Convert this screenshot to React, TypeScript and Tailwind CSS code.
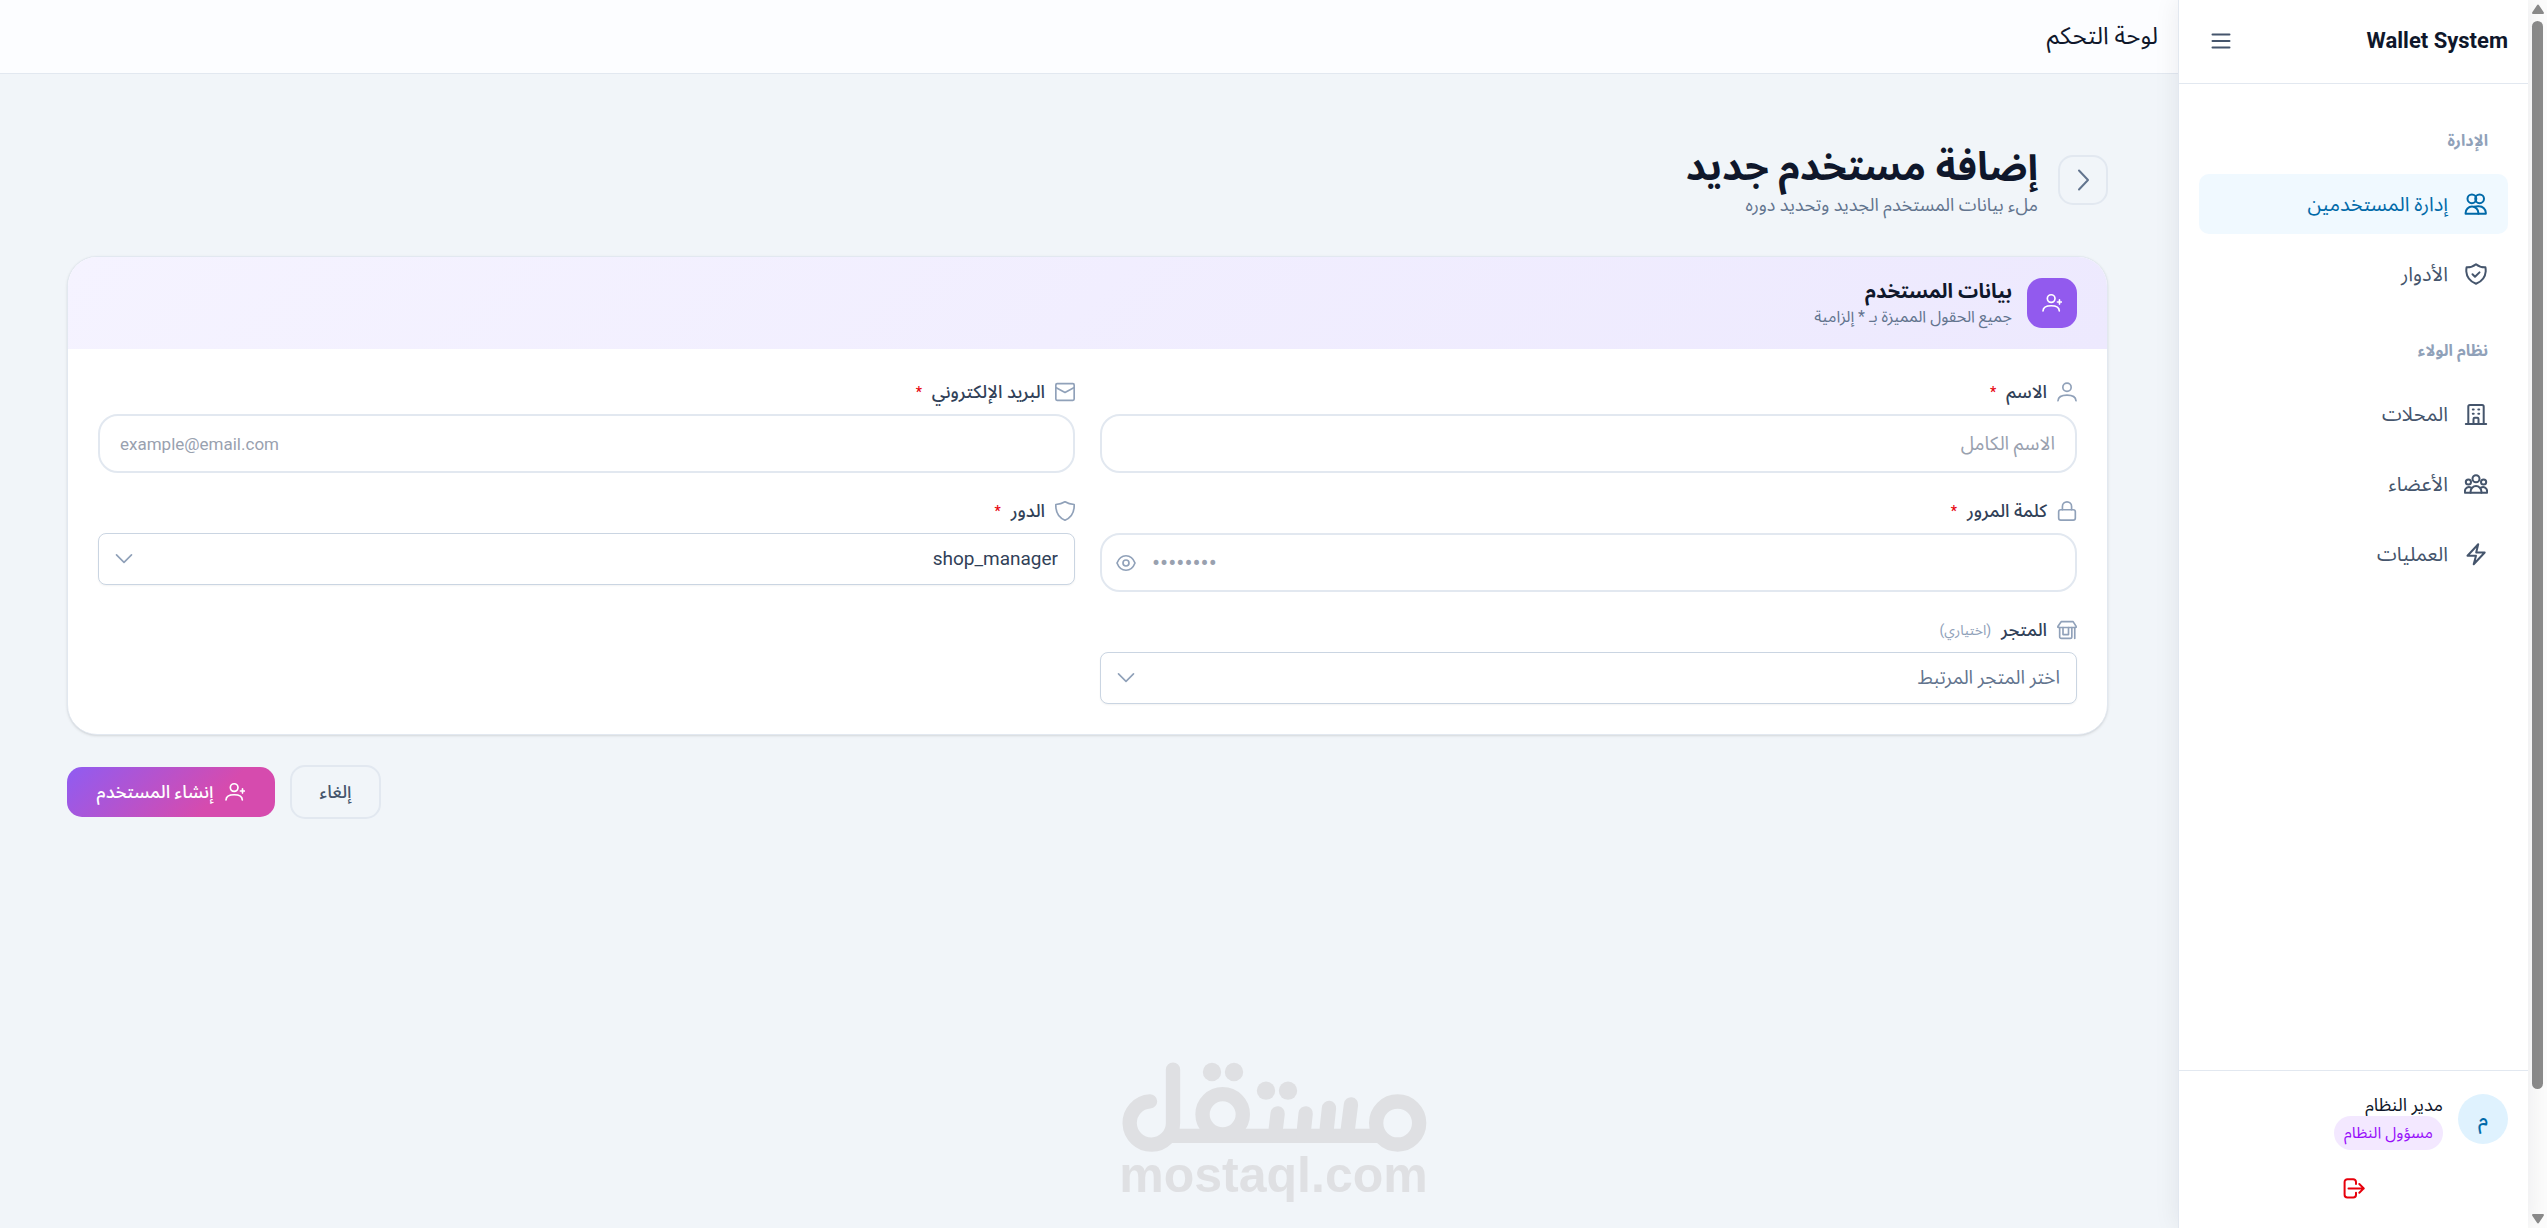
import { useState, type ReactNode } from "react";

interface IconProps {
  className?: string;
  children?: ReactNode;
}

function Icon({ className = "size-6", children }: IconProps) {
  return (
    <svg
      viewBox="0 0 24 24"
      fill="none"
      stroke="currentColor"
      strokeWidth={2}
      strokeLinecap="round"
      strokeLinejoin="round"
      aria-hidden="true"
      className={`shrink-0 ${className}`}
    >
      {children}
    </svg>
  );
}

const icons = {
  menu: <path d="M3.5 5.5h17M3.5 12h17M3.5 18.5h17" />,
  users: (
    <>
      <circle cx="7.9" cy="6.8" r="4.4" />
      <circle cx="15.6" cy="6.8" r="4.4" />
      <path d="M1.6 21.8v-.8a6.4 6.4 0 0 1 12.8 0v.8H1.6Z" />
      <path d="M10.2 14.8c1.400-.4 3.200-.7 5-.5a6.6 6.6 0 0 1 6.600 6.500v1h-7.400" />
    </>
  ),
  shieldCheck: (
    <>
      <path d="M12 2.2c2.6 2.2 5.8 3.2 9.4 3.1.3 1.4.4 2.7.3 4.2-.4 6-4 10-9.7 12.3C6.3 19.5 2.7 15.5 2.3 9.5c-.1-1.5 0-2.8.3-4.2 3.6.1 6.8-.9 9.4-3.1Z" />
      <path d="m8.5 12.3 2.5 2.4 4.5-4.3" />
    </>
  ),
  building: (
    <>
      <path d="M1.8 22h20.4M4.3 22V4.5a1.6 1.6 0 0 1 1.6-1.6h12.2a1.6 1.6 0 0 1 1.6 1.6V22" />
      <path d="M8.8 7.4h.9M14.3 7.4h.9M8.8 11.8h.9M14.3 11.8h.9" />
      <path d="M9.5 22v-5a1.2 1.2 0 0 1 1.2-1.2h2.6a1.2 1.2 0 0 1 1.2 1.2v5" />
    </>
  ),
  members: (
    <>
      <circle cx="12" cy="6.8" r="3.5" />
      <circle cx="4.4" cy="10" r="2.6" />
      <circle cx="19.6" cy="10" r="2.6" />
      <path d="M6.6 20.8v-1.3a5.4 5.4 0 0 1 10.8 0v1.3H6.6Z" />
      <path d="M7 15.6a4 4 0 0 0-6.1 3.4v1.8h5.7M17 15.6a4 4 0 0 1 6.1 3.4v1.8h-5.7" />
    </>
  ),
  bolt: <path d="M3.5 13.7 14.2 2.2l-2 8.3h8.5L9.7 22.2l2.3-8.5H3.5Z" />,
  logout: (
    <>
      <path d="M14 8V6a2.8 2.8 0 0 0-2.8-2.8H5.4A2.8 2.8 0 0 0 2.6 6v12.8a2.8 2.8 0 0 0 2.8 2.8h5.8a2.8 2.8 0 0 0 2.8-2.8v-2" />
      <path d="M6.5 12.4h15.3M17.3 8l4.5 4.4-4.5 4.4" />
    </>
  ),
  user: (
    <>
      <circle cx="12" cy="6.3" r="5" />
      <path d="M1.2 22.5c.3-4.3 4.3-6.7 10.8-6.7s10.5 2.4 10.8 6.7" />
    </>
  ),
  mail: (
    <>
      <rect x="1" y="2" width="22" height="20" rx="1.5" />
      <path d="m1.5 7 10.5 5.5L22.5 7" />
    </>
  ),
  lock: (
    <>
      <rect x="2" y="10.5" width="20" height="12.5" rx="2.5" />
      <path d="M6.5 10.5v-4a5.5 5.5 0 0 1 11 0v4" />
    </>
  ),
  shield: (
    <path d="M12 1c3.3 2 7 3 11 3.2C23.3 13 19.5 20 12 23 4.5 20 .7 13 1 4.2 5 4 8.7 3 12 1Z" />
  ),
  store: (
    <>
      <path d="M5 2h14.3L23 7.7a.8.8 0 0 1-.7 1.3H1.7A.8.8 0 0 1 1 7.7L5 2Z" />
      <path d="M3.2 9v11a2 2 0 0 0 2 2h10.6a2 2 0 0 0 2-2V9M21.3 9v13.2" />
      <path d="M7.2 9v8.5h6.6V9" />
    </>
  ),
  userPlus: (
    <>
      <circle cx="11" cy="6.7" r="4.6" />
      <path d="M1.2 21.5c.2-4.2 3.5-6.2 9.8-6.2s9.6 2 9.8 6.2M21 8.3v5M18.5 10.8h5" />
    </>
  ),
  eye: (
    <>
      <path d="M1.2 12C3.4 6.3 7.2 3.3 12 3.3S20.6 6.3 22.8 12C20.6 17.7 16.8 20.7 12 20.7S3.4 17.7 1.2 12Z" />
      <circle cx="12" cy="12" r="3.6" />
    </>
  ),
  chevronDown: <path d="m3 7 9 9 9-9" />,
  chevronRight: <path d="m8 2.5 9 9.5-9 9.5" />,
};

type IconName = keyof typeof icons;

const sections: {
  title: string;
  items: { label: string; icon: IconName; active?: boolean }[];
}[] = [
  {
    title: "الإدارة",
    items: [
      { label: "إدارة المستخدمين", icon: "users", active: true },
      { label: "الأدوار", icon: "shieldCheck" },
    ],
  },
  {
    title: "نظام الولاء",
    items: [
      { label: "المحلات", icon: "building" },
      { label: "الأعضاء", icon: "members" },
      { label: "العمليات", icon: "bolt" },
    ],
  },
];

function Sidebar() {
  return (
    <aside className="z-10 flex w-[350px] shrink-0 flex-col border-l border-slate-200 bg-white shadow-[0_0_24px_rgba(15,23,42,0.08)]">
      <div className="flex h-[84px] items-center justify-between border-b border-slate-200 px-5 pb-0.5">
        <span className="text-[22px] font-bold text-slate-900">Wallet System</span>
        <button type="button" aria-label="القائمة" className="p-2.5 text-slate-600">
          <Icon>{icons.menu}</Icon>
        </button>
      </div>
      <nav className="flex flex-1 flex-col gap-[30px] px-5 pt-10">
        {sections.map((section) => (
          <div key={section.title} className="flex flex-col gap-2.5">
            <h2 className="px-5 pb-1.5 text-base leading-[34px] font-bold text-slate-400">
              {section.title}
            </h2>
            {section.items.map((item) => (
              <a
                key={item.label}
                href="#"
                className={`flex h-[60px] items-center gap-4 rounded-[10px] px-5 text-xl ${
                  item.active ? "bg-sky-50 text-sky-700" : "text-slate-600"
                }`}
              >
                <Icon>{icons[item.icon]}</Icon>
                {item.label}
              </a>
            ))}
          </div>
        ))}
      </nav>
      <div className="border-t border-slate-200 px-5 pt-[23px] pb-[18px]">
        <div className="flex gap-[15px]">
          <div className="flex size-[50px] items-center justify-center rounded-full bg-sky-100 text-xl font-medium text-sky-700">
            م
          </div>
          <div className="flex flex-col items-start">
            <span className="text-lg leading-[22px] text-slate-900">مدير النظام</span>
            <span className="rounded-full bg-purple-100 px-2.5 text-base leading-[34px] text-purple-600">
              مسؤول النظام
            </span>
          </div>
        </div>
        <button
          type="button"
          aria-label="تسجيل الخروج"
          className="mt-4 flex h-11 w-full items-center justify-center text-red-600"
        >
          <Icon>{icons.logout}</Icon>
        </button>
      </div>
    </aside>
  );
}

interface FieldProps {
  id: string;
  label: string;
  icon: IconName;
  required?: boolean;
  hint?: string;
  children: ReactNode;
}

function Field({ id, label, icon, required, hint, children }: FieldProps) {
  return (
    <div className="flex flex-col gap-2.5">
      <label
        htmlFor={id}
        className="flex h-[25px] items-center gap-2.5 text-lg font-medium text-slate-700"
      >
        <Icon className="size-5 text-slate-400">{icons[icon]}</Icon>
        <span>{label}</span>
        {required && <span className="text-sm text-red-600">*</span>}
        {hint && (
          <span className="text-sm font-normal text-slate-400">{hint}</span>
        )}
      </label>
      {children}
    </div>
  );
}

const inputClass =
  "h-[59px] w-full rounded-[20px] border-2 border-slate-200 bg-white px-5 text-slate-800 placeholder:text-gray-400";

interface SelectProps {
  id: string;
  muted?: boolean;
  options: string[];
}

function Select({ id, muted, options }: SelectProps) {
  return (
    <div className="relative">
      <select
        id={id}
        className={`h-[52px] w-full appearance-none rounded-lg border border-slate-300 bg-white px-4 text-[19px] shadow-xs ${
          muted ? "text-slate-500" : "text-slate-700"
        }`}
      >
        {options.map((o) => (
          <option key={o}>{o}</option>
        ))}
      </select>
      <Icon className="pointer-events-none absolute top-4 left-4 size-5 text-slate-400">
        {icons.chevronDown}
      </Icon>
    </div>
  );
}

function UserForm() {
  const [showPassword, setShowPassword] = useState(false);
  return (
    <form onSubmit={(e) => e.preventDefault()}>
      <section className="overflow-hidden rounded-[30px] border border-slate-200 bg-white shadow-sm">
        <div className="flex items-center gap-[15px] bg-[linear-gradient(135deg,#f5f3ff,#ede9fe)] px-[30px] py-5">
          <div className="flex size-[50px] items-center justify-center rounded-[15px] bg-[#925aee] text-white">
            <Icon className="size-5">{icons.userPlus}</Icon>
          </div>
          <div>
            <h2 className="text-xl leading-7 font-bold text-slate-900">
              بيانات المستخدم
            </h2>
            <p className="text-base leading-6 text-slate-500">
              جميع الحقول المميزة بـ * إلزامية
            </p>
          </div>
        </div>
        <div className="grid grid-cols-2 items-start gap-[25px] p-[30px]">
          <Field id="name" label="الاسم" icon="user" required>
            <input
              id="name"
              placeholder="الاسم الكامل"
              className={`${inputClass} text-[19px]`}
            />
          </Field>
          <Field id="email" label="البريد الإلكتروني" icon="mail" required>
            <input
              id="email"
              type="email"
              dir="ltr"
              placeholder="example@email.com"
              className={`${inputClass} text-[17px]`}
            />
          </Field>
          <Field id="password" label="كلمة المرور" icon="lock" required>
            <div className="relative">
              <input
                id="password"
                type={showPassword ? "text" : "password"}
                dir="ltr"
                placeholder="••••••••"
                className={`${inputClass} pl-[50px] text-2xl`}
              />
              <button
                type="button"
                aria-label="إظهار كلمة المرور"
                onClick={() => setShowPassword(!showPassword)}
                className="absolute inset-y-0 left-4 text-slate-400"
              >
                <Icon className="size-5">{icons.eye}</Icon>
              </button>
            </div>
          </Field>
          <Field id="role" label="الدور" icon="shield" required>
            <Select id="role" options={["shop_manager"]} />
          </Field>
          <Field id="shop" label="المتجر" icon="store" hint="(اختياري)">
            <Select id="shop" muted options={["اختر المتجر المرتبط"]} />
          </Field>
        </div>
      </section>
      <div className="mt-[30px] flex items-center justify-end gap-[15px]">
        <button
          type="button"
          className="h-[54px] w-[91px] rounded-[15px] border-2 border-slate-200 text-lg font-medium text-slate-600"
        >
          إلغاء
        </button>
        <button
          type="submit"
          className="flex h-[50px] w-[208px] items-center justify-center gap-3 rounded-[15px] bg-[linear-gradient(135deg,#8f5cf2,#d64bae_70%)] text-lg font-medium text-white"
        >
          <Icon className="size-5">{icons.userPlus}</Icon>
          إنشاء المستخدم
        </button>
      </div>
    </form>
  );
}

function Watermark() {
  return (
    <div
      dir="ltr"
      className="pointer-events-none fixed bottom-[30px] left-1/2 flex w-[306px] -translate-x-1/2 flex-col items-center text-[#dfe0e3]"
    >
      <svg
        viewBox="60 65 918 271"
        fill="none"
        stroke="currentColor"
        strokeWidth={43}
        strokeLinecap="round"
        role="img"
        aria-label="مستقل"
        className="w-full"
      >
        <path d="M147 183A65 65 0 1 0 216 248V88" />
        <path d="M205 286.5H850" strokeLinecap="butt" />
        <circle cx="365" cy="222" r="60.5" />
        <circle cx="890" cy="248" r="64.5" />
        <path d="M530 219l-8 67M614 219l-7 67M684 203l-9 83M750 192l-12 94" />
        <g fill="currentColor" stroke="none">
          <circle cx="333" cy="95" r="27.5" />
          <circle cx="399" cy="95" r="27.5" />
          <circle cx="495" cy="151" r="27.5" />
          <circle cx="561" cy="151" r="27.5" />
        </g>
      </svg>
      <span className="font-['Liberation_Sans',sans-serif] text-[50px] leading-[46px] font-bold">
        mostaql.com
      </span>
    </div>
  );
}

function ScrollRail() {
  return (
    <div className="flex w-[19px] shrink-0 flex-col items-center justify-between bg-[#fcfcfc] py-1 text-[#8b8b8b]">
      <svg viewBox="0 0 12 10" fill="currentColor" className="w-3" aria-hidden="true">
        <path d="M5 1.2a1.2 1.2 0 0 1 2 0l4.7 7A1.2 1.2 0 0 1 10.8 10H1.2a1.2 1.2 0 0 1-.9-1.8Z" />
      </svg>
      <div className="mt-[7px] mb-[125px] w-[11px] flex-1 rounded-full bg-[#8b8b8b]" />
      <svg viewBox="0 0 12 10" fill="currentColor" className="w-3" aria-hidden="true">
        <path d="M5 8.8a1.2 1.2 0 0 0 2 0l4.7-7A1.2 1.2 0 0 0 10.8 0H1.2a1.2 1.2 0 0 0-.9 1.8Z" />
      </svg>
    </div>
  );
}

export default function App() {
  return (
    <div
      dir="rtl"
      className="flex min-h-screen bg-slate-100 font-[Roboto,'Noto_Sans_Arabic','DejaVu_Sans',sans-serif]"
    >
      <ScrollRail />
      <Sidebar />
      <div className="flex min-w-0 flex-1 flex-col">
        <header className="flex h-[74px] items-center border-b border-slate-200 bg-[#fcfdff] px-5 pb-0.5">
          <span className="text-2xl text-slate-900">لوحة التحكم</span>
        </header>
        <main className="pt-[68px] pr-[70px] pl-[67px]">
          <div className="mb-[38px] flex items-center gap-5">
            <button
              type="button"
              aria-label="رجوع"
              className="flex size-[50px] items-center justify-center rounded-[15px] border-2 border-slate-200 text-slate-500"
            >
              <Icon className="size-6">{icons.chevronRight}</Icon>
            </button>
            <div>
              <h1 className="text-[39px] leading-[50px] font-bold text-slate-900">
                إضافة مستخدم جديد
              </h1>
              <p className="text-lg leading-[26px] text-slate-500">
                ملء بيانات المستخدم الجديد وتحديد دوره
              </p>
            </div>
          </div>
          <UserForm />
        </main>
      </div>
      <Watermark />
    </div>
  );
}
